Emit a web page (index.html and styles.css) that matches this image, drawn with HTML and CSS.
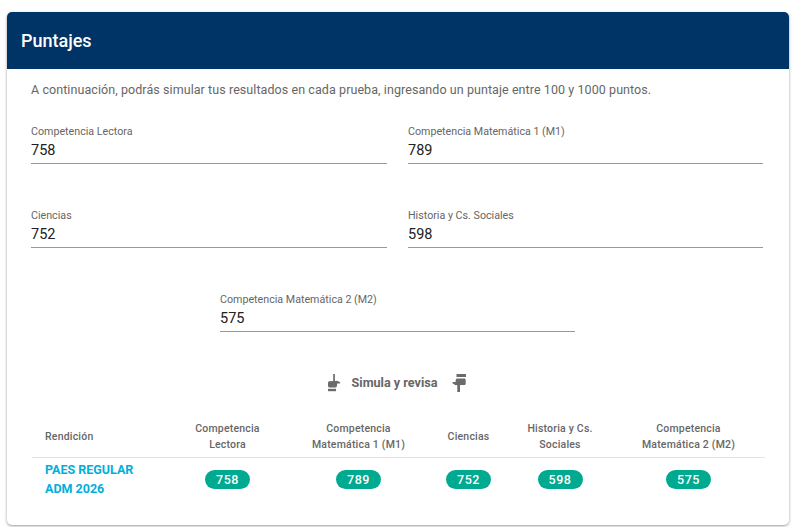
FILE: index.html
```html
<!DOCTYPE html>
<html lang="es">
<head>
<meta charset="utf-8">
<title>Puntajes</title>
<link rel="stylesheet" href="styles.css">
</head>
<body>
<section class="card">
  <header class="card-head"><h1>Puntajes</h1></header>
  <div class="card-body">
    <p class="intro">A continuación, podrás simular tus resultados en cada prueba, ingresando un puntaje entre 100 y 1000 puntos.</p>
    <div class="fields">
      <div class="field"><label>Competencia Lectora</label><div class="value">758</div></div>
      <div class="field"><label>Competencia Matemática 1 (M1)</label><div class="value">789</div></div>
      <div class="field"><label>Ciencias</label><div class="value">752</div></div>
      <div class="field"><label>Historia y Cs. Sociales</label><div class="value">598</div></div>
      <div class="field field-center"><label>Competencia Matemática 2 (M2)</label><div class="value">575</div></div>
    </div>
    <div class="simula">
      <svg class="hand" viewBox="0 0 14 18" width="14" height="18"><path d="M6.200 0h1.700v6.600l.3.3 1.600-.1c.5 0 2.500 1.100 3.200 1.500.5.400.3 1.200-.4 1.200H10.200l-.3 2.400c-.1 1-.9 1.600-1.900 1.600H3C1.700 13.500 1 12.700 1 11.400V8.800C1 8 1.700 7.300 2.500 7.300L6.200 7z"/><rect x="1" y="14.800" width="8" height="2.400"/></svg>
      <span class="simula-text">Simula y revisa</span>
      <svg class="hand hand-right" viewBox="0 0 14 18" width="14" height="18"><rect x="4.500" y="0" width="9.500" height="3"/><path d="M5.500 4.500h6.700c1 0 1.500.7 1.500 1.500v3.700c0 .8-.8 1.400-1.600 1.400H8V18H5.300V11.500L4.800 11 3.500 11.200C2.800 11 1.300 9.900.6 9.300.1 8.800.5 8.100 1.200 8.100H3.500L3.800 5.800C4 5 4.700 4.500 5.500 4.500z"/></svg>
    </div>
    <table class="scores">
      <colgroup><col class="c1"><col class="c2"><col class="c3"><col class="c4"><col class="c5"><col class="c6"></colgroup>
      <thead>
        <tr>
          <th class="first">Rendición</th>
          <th>Competencia<br>Lectora</th>
          <th>Competencia<br>Matemática 1 (M1)</th>
          <th>Ciencias</th>
          <th>Historia y Cs.<br>Sociales</th>
          <th>Competencia<br>Matemática 2 (M2)</th>
        </tr>
      </thead>
      <tbody>
        <tr>
          <td class="first name">PAES REGULAR<br>ADM 2026</td>
          <td><span class="pill">758</span></td>
          <td><span class="pill">789</span></td>
          <td><span class="pill">752</span></td>
          <td><span class="pill">598</span></td>
          <td><span class="pill">575</span></td>
        </tr>
      </tbody>
    </table>
  </div>
</section>
</body>
</html>
```
FILE: styles.css
```css
* { box-sizing: border-box; }
html, body { margin: 0; height: 100%; background: #fff; }
body {
  padding: 12px 11px 0 7px;
  font-family: Roboto, "Liberation Sans", sans-serif;
  overflow: hidden;
}
.card {
  height: 513px;
  border-radius: 5px;
  background: #fff;
  box-shadow: 0 1px 3px rgba(0,0,0,.4);
  overflow: hidden;
}
.card-head {
  height: 57px;
  background: #003366;
  display: flex;
  align-items: center;
  padding: 0 14px;
}
.card-head h1 {
  margin: 0;
  color: #fff;
  font-size: 18px;
  font-weight: 500;
}
.card-body { padding: 0 25px 0 24px; }
.intro {
  margin: 12px 0 0;
  font-size: 12.500px;
  line-height: 17px;
  color: #666;
  letter-spacing: .075px;
}
.fields {
  margin-top: 16px;
  display: grid;
  grid-template-columns: 356px 355px;
  column-gap: 21px;
  row-gap: 34px;
}
.field {
  height: 50px;
  border-bottom: 1px solid #999;
  padding-top: 8px;
}
.field label {
  display: block;
  font-size: 10.700px;
  line-height: 13px;
  color: #666;
  padding-top: 3px;
}
.value {
  font-size: 14.500px;
  line-height: 18px;
  margin-top: 4px;
  color: #212121;
}
.field-center {
  grid-column: 1 / -1;
  width: 355px;
  margin-left: 189px;
}
.simula {
  margin-top: 40px;
  display: flex;
  justify-content: center;
  align-items: center;
  gap: 11px;
  height: 22px;
  font-size: 12.600px;
  font-weight: 700;
  color: #666;
  padding-right: 2px;
}
.simula-text { padding-bottom: 2px; }
.hand { fill: #6b6b6b; display: block; }
.hand-right { margin-left: 4px; }
.scores {
  width: 733px;
  margin: 24px 0 0 1px;
  border-collapse: collapse;
  table-layout: fixed;
  color: #666;
}
.c1 { width: 135px; }
.c2 { width: 121px; }
.c3 { width: 141px; }
.c4 { width: 79px; }
.c5 { width: 104px; }
.c6 { width: 153px; }
.scores th {
  height: 39px;
  padding: 0;
  font-size: 10.500px;
  line-height: 16px;
  font-weight: 500;
  letter-spacing: .2px;
  text-align: center;
  border-bottom: 1px solid #e3e3e3;
}
.scores td {
  padding: 0;
  text-align: center;
  height: 46px;
  vertical-align: top;
}
.scores td.first { padding-top: 2px; }
.scores .first { text-align: left; padding-left: 13px; }
.name {
  font-size: 12.500px;
  line-height: 19px;
  font-weight: 700;
  color: #00afdb;
}
.pill {
  display: inline-block;
  margin-top: 12px;
  width: 45px;
  height: 19px;
  line-height: 19px;
  border-radius: 10px;
  background: #00aa90;
  color: #fff;
  font-size: 12.500px;
  font-weight: 500;
  letter-spacing: .5px;
}
```
